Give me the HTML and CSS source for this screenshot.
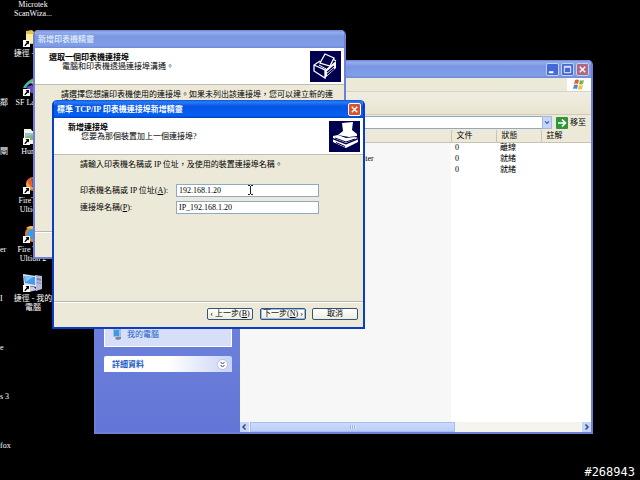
FILE: index.html
```html
<!DOCTYPE html>
<html lang="zh-Hant">
<head>
<meta charset="utf-8">
<title>標準 TCP/IP 印表機連接埠新增精靈</title>
<link rel="stylesheet" href="styles.css">
</head>
<body>
<svg width="0" height="0" class="defs" aria-hidden="true">
  <symbol id="arrow" viewBox="0 0 7 7"><path fill="#fff" d="M0 0h7v7H0z"/><path fill="#000" d="M2.500 1H6v3.500L5 3.500 2.500 6 1.200 5.800 3.800 2.300z"/></symbol>
</svg>
<main class="desktop">
  <div class="edge-labels">
    <span></span><span></span><span>鄰</span><span>閘</span><span></span><span>er</span><span>I</span><span>e</span><span>s 3</span><span>fox</span>
  </div>
  <div class="shortcuts">
    <div class="shortcut"><span>Microtek<br>ScanWiza...</span></div>
    <div class="shortcut">
      <svg viewBox="0 0 20 18"><path fill="#e8c050" d="M3 2l6-1 2 2h7v12H3z"/><path fill="#fff0a0" d="M3 5h15v9H3z"/><use href="#arrow" x="0" y="11" width="7" height="7"/></svg>
      <span>捷徑 - 網路</span></div>
    <div class="shortcut">
      <svg viewBox="0 0 20 18"><path fill="#45b8ae" d="M0 10Q3 3 11 0l1 4Q5 5 3 10z"/><path fill="#f2bd38" d="M7 5l7-4v6z"/><path fill="#d83c3c" d="M9 6h9v4h-7z"/><path fill="#6c4bd0" d="M3 9l6-2 7 9-8-1z"/><use href="#arrow" x="0" y="11" width="7" height="7"/></svg>
      <span>SF Launch</span></div>
    <div class="shortcut">
      <svg viewBox="0 0 20 18"><path fill="#f3f5e8" d="M1 2h7l1 2h10v13H1z"/><path fill="#8ec7dc" d="M2 6h16v7H2z"/><path fill="#8ab575" d="M2 10l6-2 10 3v2H2z"/><use href="#arrow" x="0" y="11" width="7" height="7"/></svg>
      <span>Human</span></div>
    <div class="shortcut">
      <svg viewBox="0 0 20 18"><circle cx="10" cy="8" r="7" fill="#e4602a"/><path fill="#3165aa" d="M8 3q7-1 7 5t-7 4q3-3 0-9z"/><path fill="#f0a045" d="M4 4q2 7 8 8-7 4-9-3z"/><use href="#arrow" x="0" y="11" width="7" height="7"/></svg>
      <span>FireTune<br>Ultion 1</span></div>
    <div class="shortcut">
      <svg viewBox="0 0 20 18"><circle cx="10" cy="9" r="8" fill="#e78129"/><circle cx="9" cy="9" r="5" fill="#3b9bdc"/><path fill="#f7bc55" d="M3 3q5-4 10 0L9 4z"/><use href="#arrow" x="0" y="11" width="7" height="7"/></svg>
      <span>Fire Tune<br>Ultion 2</span></div>
    <div class="shortcut">
      <svg viewBox="0 0 20 18"><path fill="#b5b9dc" d="M12 1l7 1v13l-6 2z"/><path fill="#777fac" d="M14 4l4 1v2l-4-1zm0 4l4 1v1l-4-1z"/><path fill="#d8e4fa" d="M0 0l13 2v11L1 11z"/><path fill="#479ce9" d="M1 2l11 1v8L2 9z"/><path fill="#87c7f8" d="M2 2l8 1-7 5z"/><path fill="#c9cce5" d="M6 12l5 1 3 3-8 2-3-3z"/><use href="#arrow" x="0" y="11" width="7" height="7"/></svg>
      <span>捷徑 - 我的<br>電腦</span></div>
  </div>

  <section class="window explorer" aria-label="印表機和傳真">
    <header class="titlebar inactive">
      <div class="controls">
        <button class="control" aria-label="最小化"><svg viewBox="0 0 12 12"><path fill="#fff" d="M2 8h5v2H2z"/></svg></button>
        <button class="control" aria-label="最大化"><svg viewBox="0 0 12 12"><path fill="none" stroke="#fff" d="M2.500 3.500h7v6h-7zM2 2.500h8"/></svg></button>
        <button class="control close" aria-label="關閉"><svg viewBox="0 0 12 12"><path stroke="#fff" stroke-width="1.500" d="M3 3l6 6M9 3L3 9"/></svg></button>
      </div>
    </header>
    <div class="menubar"><div class="brand"><svg viewBox="0 0 12 12"><path fill="#e46032" d="M2 1q2-1 4 0L5 5Q3 4 1 5z"/><path fill="#80b53f" d="M7 1q2 1 4 0l-1 4Q8 6 6 5z"/><path fill="#5685d5" d="M1 6q2-1 4 0l-1 4Q2 9 0 10z"/><path fill="#f0c43a" d="M6 6q2 1 4 0l-1 4q-2 1-4 0z"/></svg></div></div>
    <div class="toolbar"></div>
    <div class="address">
      <input type="text" aria-label="網址">
      <button class="drop" aria-label="展開"><svg viewBox="0 0 10 12"><path fill="none" stroke="#3c5a94" stroke-width="1.500" d="M2.500 4.500L5 7l2.500-2.500"/></svg></button>
      <button class="go"><svg viewBox="0 0 12 12"><rect width="12" height="12" rx="1" fill="#2f963a"/><path fill="none" stroke="#fff" stroke-width="1.600" d="M2 6h7M6 2.500L9.500 6 6 9.500"/></svg>移至</button>
    </div>
    <div class="content">
      <aside class="tasks">
        <div class="card"><a href="#pc"><svg viewBox="0 0 9 11"><path fill="#a4bce0" d="M0 0h8v8H0z"/><path fill="#3f9bdc" d="M1 1h5v6H1z"/><path fill="#7a86a8" d="M3 8h5v2l-3 1-3-1z"/></svg>我的電腦</a></div>
        <div class="card-head"><b>詳細資料</b>
          <button aria-label="展開詳細資料"><svg viewBox="0 0 11 11"><circle cx="5.500" cy="5.500" r="5" fill="#fff" stroke="#b5c0df"/><path fill="none" stroke="#2b3f7c" d="M3.500 3l2 2 2-2M3.500 6l2 2 2-2"/></svg></button></div>
      </aside>
      <div class="list">
        <div class="rows">
          <table>
            <thead><tr><th class="name"></th><th>文件</th><th>狀態</th><th>註解</th></tr></thead>
            <tbody>
              <tr><td class="name"></td><td>0</td><td>離線</td><td></td></tr>
              <tr><td class="name">Printer</td><td>0</td><td>就緒</td><td></td></tr>
              <tr><td class="name"></td><td>0</td><td>就緒</td><td></td></tr>
            </tbody>
          </table>
        </div>
        <div class="scrollbar">
          <button aria-label="向左捲動"><svg viewBox="0 0 9 10"><path fill="none" stroke="#344c80" stroke-width="1.500" d="M5.500 2.500L3 5l2.500 2.500"/></svg></button>
          <div class="track"><div class="thumb"><i></i></div></div>
          <button aria-label="向右捲動"><svg viewBox="0 0 9 10"><path fill="none" stroke="#344c80" stroke-width="1.500" d="M3.500 2.500L6 5 3.500 7.500"/></svg></button>
        </div>
      </div>
    </div>
  </section>

  <section class="window wizard printer" aria-label="新增印表機精靈">
    <header class="titlebar inactive"><h1>新增印表機精靈</h1></header>
    <div class="banner">
      <div><h2>選取一個印表機連接埠</h2><p>電腦和印表機透過連接埠溝通。</p></div>
      <svg viewBox="0 0 31 31"><path fill="#00004f" d="M0 0h31v31H0z"/><path fill="#fff" d="M15 19l11-9v7L15 27z"/><path fill="none" stroke="#fff" stroke-width="1.300" d="M10 10l-6 4v6l11 7V19L4 14M10 12l5-9 9 4-4 8zM23 8l3 2"/><path fill="none" stroke="#fff" d="M9 14l7 4"/><path fill="none" stroke="#00004f" stroke-width="1.200" d="M17 21l7-6M17 23.500l7-6"/></svg>
    </div>
    <div class="body"><p>請選擇您想讓印表機使用的連接埠。如果未列出該連接埠，您可以建立新的連接埠。</p></div>
    <footer></footer>
  </section>

  <section class="window wizard port" aria-label="標準 TCP/IP 印表機連接埠新增精靈">
    <header class="titlebar"><h1>標準 TCP/IP 印表機連接埠新增精靈</h1>
      <div class="controls"><button class="control close" aria-label="關閉"><svg viewBox="0 0 12 12"><path stroke="#fff" stroke-width="1.500" d="M3 3l6 6M9 3L3 9"/></svg></button></div>
    </header>
    <div class="banner">
      <div><h2>新增連接埠</h2><p>您要為那個裝置加上一個連接埠?</p></div>
      <svg viewBox="0 0 31 31"><path fill="#00004f" d="M0 0h31v31H0z"/><path fill="#fff" d="M13 2l11-1-1 8 5 4v2l-8 1-11-2 5-4z"/><path fill="#fff" d="M4 15l5-1 8 3 9-1 3 1-12 5L4 17zM4 18.500l13 5 12-5v2.500l-12 6-13-6z"/><path fill="none" stroke="#00004f" d="M6 17l11 4 9-3M7 21.500l9 4"/></svg>
    </div>
    <form class="body">
      <p>請輸入印表機名稱或 IP 位址，及使用的裝置連接埠名稱。</p>
      <div class="field"><label for="addr">印表機名稱或 IP 位址(<u>A</u>):</label><input id="addr" type="text" value="192.168.1.20"></div>
      <div class="field"><label for="port">連接埠名稱(<u>P</u>):</label><input id="port" type="text" value="IP_192.168.1.20"></div>
    </form>
    <footer>
      <div class="pair"><button>‹ 上一步(<u>B</u>)</button><button class="default">下一步(<u>N</u>) ›</button></div>
      <button>取消</button>
    </footer>
  </section>

  <svg class="caret" viewBox="0 0 5 10"><path fill="none" stroke="#222" d="M0 .5h2M3 .5h2M2.500 1v8M0 9.500h2M3 9.500h2"/></svg>
  <span class="stamp">#268943</span>
</main>
</body>
</html>
```
FILE: styles.css
```css
* { box-sizing: border-box; }
body {
  margin: 0;
  background: #000;
  font: 8px/9px "Liberation Serif", "Noto Sans CJK TC", serif;
  color: #000;
}
button, input { font: inherit; color: inherit; margin: 0; padding: 0; border: 0; }
h1, h2, p { margin: 0; font-size: 8px; }
svg { display: block; flex: none; }
.defs { position: absolute; }
.desktop { position: relative; height: 100vh; overflow: hidden; }

/* Desktop icons */
.edge-labels, .shortcuts {
  position: absolute;
  top: 0;
  display: grid;
  grid-auto-rows: 49px;
  color: #fff;
}
.edge-labels { left: 0; white-space: nowrap; }
.shortcuts { left: 9px; width: 48px; text-align: center; white-space: nowrap; }
.shortcut { display: flex; flex-direction: column; align-items: center; }
.shortcut svg { width: 20px; height: 18px; margin-bottom: 2px; }
.shortcut:not(:first-child) { margin-top: -20px; }

/* Windows */
.window {
  position: absolute;
  display: flex;
  flex-direction: column;
  border: 2px solid #6f7fd4;
  border-top: 0;
  border-radius: 5px 5px 0 0;
  overflow: hidden;
}
.titlebar {
  display: flex;
  align-items: center;
  justify-content: space-between;
  height: 18px;
  padding: 0 2px 0 3px;
  color: #fff;
  background: linear-gradient(#1254d8, #2a7cf8 12%, #0354e2 35%, #0560f4 85%, #0344c0);
}
.titlebar.inactive {
  color: #d8e4f8;
  background: linear-gradient(#6c84d4, #93aeee 12%, #7b96e1 35%, #7f9fe8 85%, #7288d6);
}
.controls { display: flex; gap: 2px; margin-left: auto; }
.control {
  width: 13px;
  height: 13px;
  border: 1px solid #c0cff4;
  border-radius: 2px;
  background: #4468d8;
}
.control svg { width: 11px; height: 11px; }
.control.close { background: #d9522f; border-color: #fff; }
.inactive .control.close { background: #b2677e; border-color: #c0cff4; }

/* Wizards */
.wizard { width: 313px; height: 229px; background: #ece9d8; }
.printer { left: 33px; top: 30px; }
.port { left: 52px; top: 100px; border-color: #0a3cc4; }
.banner {
  display: flex;
  justify-content: space-between;
  height: 37px;
  padding: 3px 3px 0 14px;
  background: #fff;
  border-bottom: 1px solid #c0beb0;
}
.banner h2 { margin-top: 2px; }
.banner p { padding-left: 13px; font-weight: 400; }
.banner svg { width: 31px; height: 31px; }
.body { flex: 1; padding: 5px 8px 0 26px; }
.field { display: grid; grid-template-columns: 96px 143px; align-items: center; margin-bottom: 4px; white-space: nowrap; }
.body p + .field { margin-top: 15px; }
.field input {
  height: 13px;
  padding: 0 2px;
  border: 1px solid #8fa9c4;
  background: #fff;
}
.wizard footer {
  display: flex;
  justify-content: flex-end;
  gap: 6px;
  height: 26px;
  padding: 6px 5px 0;
  border-top: 1px solid #b8b6aa;
  box-shadow: inset 0 1px #fff;
}
.pair { display: flex; gap: 7px; }
.wizard footer button {
  width: 46px;
  height: 12px;
  border: 1px solid #345578;
  border-radius: 2px;
  background: linear-gradient(#fff, #eeecdf);
  line-height: 10px;
  white-space: nowrap;
}
.wizard footer .default { box-shadow: inset 0 0 0 1px #9db9ec; }

/* Explorer */
.explorer { left: 94px; top: 60px; width: 499px; height: 374px; background: #ece9d8; }
.menubar { display: flex; justify-content: flex-end; height: 14px; border-bottom: 1px solid #d8d4c4; }
.brand { display: grid; place-items: center; width: 24px; background: #fff; }
.brand svg { width: 12px; height: 12px; }
.toolbar { height: 23px; background: linear-gradient(#f0eee2, #e8e4d0); border-bottom: 1px solid #d0ccba; }
.address { display: flex; align-items: center; height: 15px; padding: 0 1px 0 3px; }
.address input { flex: 1; min-width: 0; height: 13px; background: #fff; border: 1px solid #8fa9c4; border-right: 0; }
.drop { width: 10px; height: 13px; border: 1px solid #a4b8dc; background: #c4d4fa; }
.drop svg { width: 8px; height: 11px; }
.go { display: flex; align-items: center; gap: 2px; width: 34px; margin-left: 4px; background: none; white-space: nowrap; }
.go svg { width: 12px; height: 12px; }
.content { flex: 1; display: flex; min-height: 0; }
.tasks {
  display: flex;
  flex-direction: column;
  gap: 9px;
  width: 144px;
  padding: 0 8px;
  background: linear-gradient(#7c96e4, #6375d6);
}
.card { display: flex; align-items: flex-end; height: 217px; padding: 0 8px 6px; border: 1px solid #fff; background: #d6dff7; }
.card a { display: flex; align-items: center; gap: 5px; color: #215dc6; text-decoration: none; }
.card svg { width: 9px; height: 11px; }
.card-head {
  display: flex;
  align-items: center;
  justify-content: space-between;
  height: 16px;
  padding: 0 4px 0 8px;
  border-radius: 2px 2px 0 0;
  color: #215dc6;
  background: linear-gradient(90deg, #fff 50%, #c8d4f6);
}
.card-head button { background: none; }
.card-head svg { width: 11px; height: 11px; }
.list { flex: 1; display: flex; flex-direction: column; min-width: 0; background: #fff; }
.rows { flex: 1; background: linear-gradient(90deg, #f7f7f7 211px, #fff 211px); }
table { width: 100%; border-collapse: collapse; table-layout: fixed; text-align: left; }
thead { background: #ece9d8; }
tr { height: 11px; }
th, td { width: 45px; padding: 0 0 0 4px; }
th:last-child, td:last-child { width: auto; }
th { height: 12px; padding-left: 5px; font-weight: 400; border-left: 1px solid #c8c4b2; border-bottom: 1px solid #c8c4b2; }
.name { width: 211px; }
th.name { border-left: 0; }
td.name { padding-left: 112px; }
.scrollbar { display: flex; height: 10px; background: #f5f4ee; }
.scrollbar button { width: 9px; background: #c6d5fb; }
.scrollbar svg { width: 9px; height: 10px; }
.track { flex: 1; padding: 0 1px; }
.thumb { display: grid; place-items: center; width: 62%; height: 10px; border: 1px solid #a8bef0; background: linear-gradient(#ccdafd, #bccdf9); }
.thumb i { width: 6px; height: 4px; background: repeating-linear-gradient(90deg, #a0b6ea 0 1px, #dfe8ff 1px 2px); }

/* Overlays */
.caret { position: absolute; left: 248px; top: 185px; width: 5px; height: 10px; }
.stamp { position: absolute; right: 5px; bottom: 1px; font: 12px/14px "DejaVu Sans Mono", monospace; color: #fff; }
```
